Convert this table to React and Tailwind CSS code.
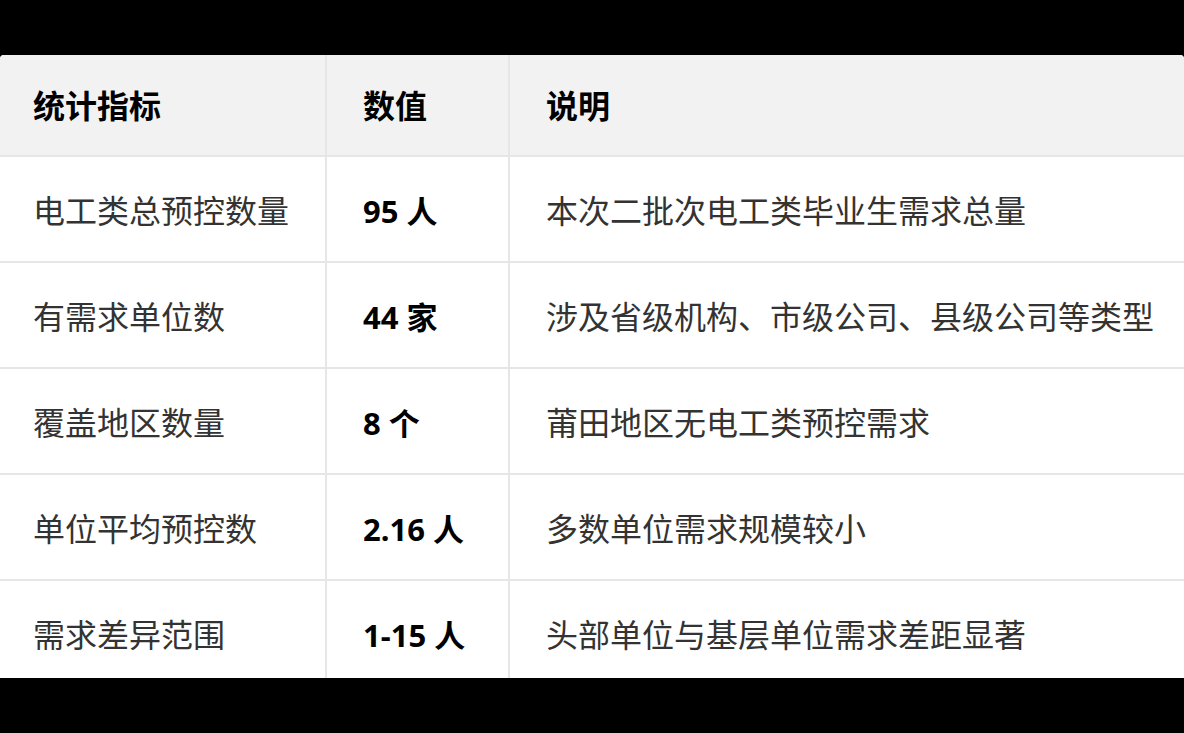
import React from "react";

const rows = [
  ["电工类总预控数量", "95 人", "本次二批次电工类毕业生需求总量"],
  ["有需求单位数", "44 家", "涉及省级机构、市级公司、县级公司等类型"],
  ["覆盖地区数量", "8 个", "莆田地区无电工类预控需求"],
  ["单位平均预控数", "2.16 人", "多数单位需求规模较小"],
  ["需求差异范围", "1-15 人", "头部单位与基层单位需求差距显著"],
];

export default function App() {
  return (
    <div
      className="flex h-[733px] w-[1184px] flex-col bg-black"
      style={{ fontFamily: '"Noto Sans", "Noto Sans CJK SC", sans-serif' }}
    >
      <div className="h-[55px] shrink-0" />
      <div className="h-[623px] shrink-0 overflow-hidden rounded-t-[4px] bg-white">
        <div className="grid grid-cols-[327px_183px_1fr]">
          <div className="flex h-[102px] items-center border-b-2 border-r-2 border-[#e6e6e6] bg-[#f2f2f2] pl-[33px] pt-[2px] text-[32px] font-bold text-black">
            统计指标
          </div>
          <div className="flex h-[102px] items-center border-b-2 border-r-2 border-[#e6e6e6] bg-[#f2f2f2] pl-[36px] pt-[2px] text-[32px] font-bold text-black">
            数值
          </div>
          <div className="flex h-[102px] items-center border-b-2 border-[#e6e6e6] bg-[#f2f2f2] pl-[36px] pt-[2px] text-[32px] font-bold text-black">
            说明
          </div>
          {rows.map((r) => (
            <React.Fragment key={r[0]}>
              <div className="flex h-[106px] items-center border-b-2 border-r-2 border-[#e6e6e6] pl-[33px] pt-[4px] text-[32px] text-[#333]">
                {r[0]}
              </div>
              <div className="flex h-[106px] items-center border-b-2 border-r-2 border-[#e6e6e6] pl-[36px] pt-[4px] text-[31px] font-bold text-black">
                {r[1]}
              </div>
              <div className="flex h-[106px] items-center whitespace-nowrap border-b-2 border-[#e6e6e6] pl-[36px] pt-[4px] text-[32px] text-[#333]">
                {r[2]}
              </div>
            </React.Fragment>
          ))}
        </div>
      </div>
      <div className="flex-1" />
    </div>
  );
}
